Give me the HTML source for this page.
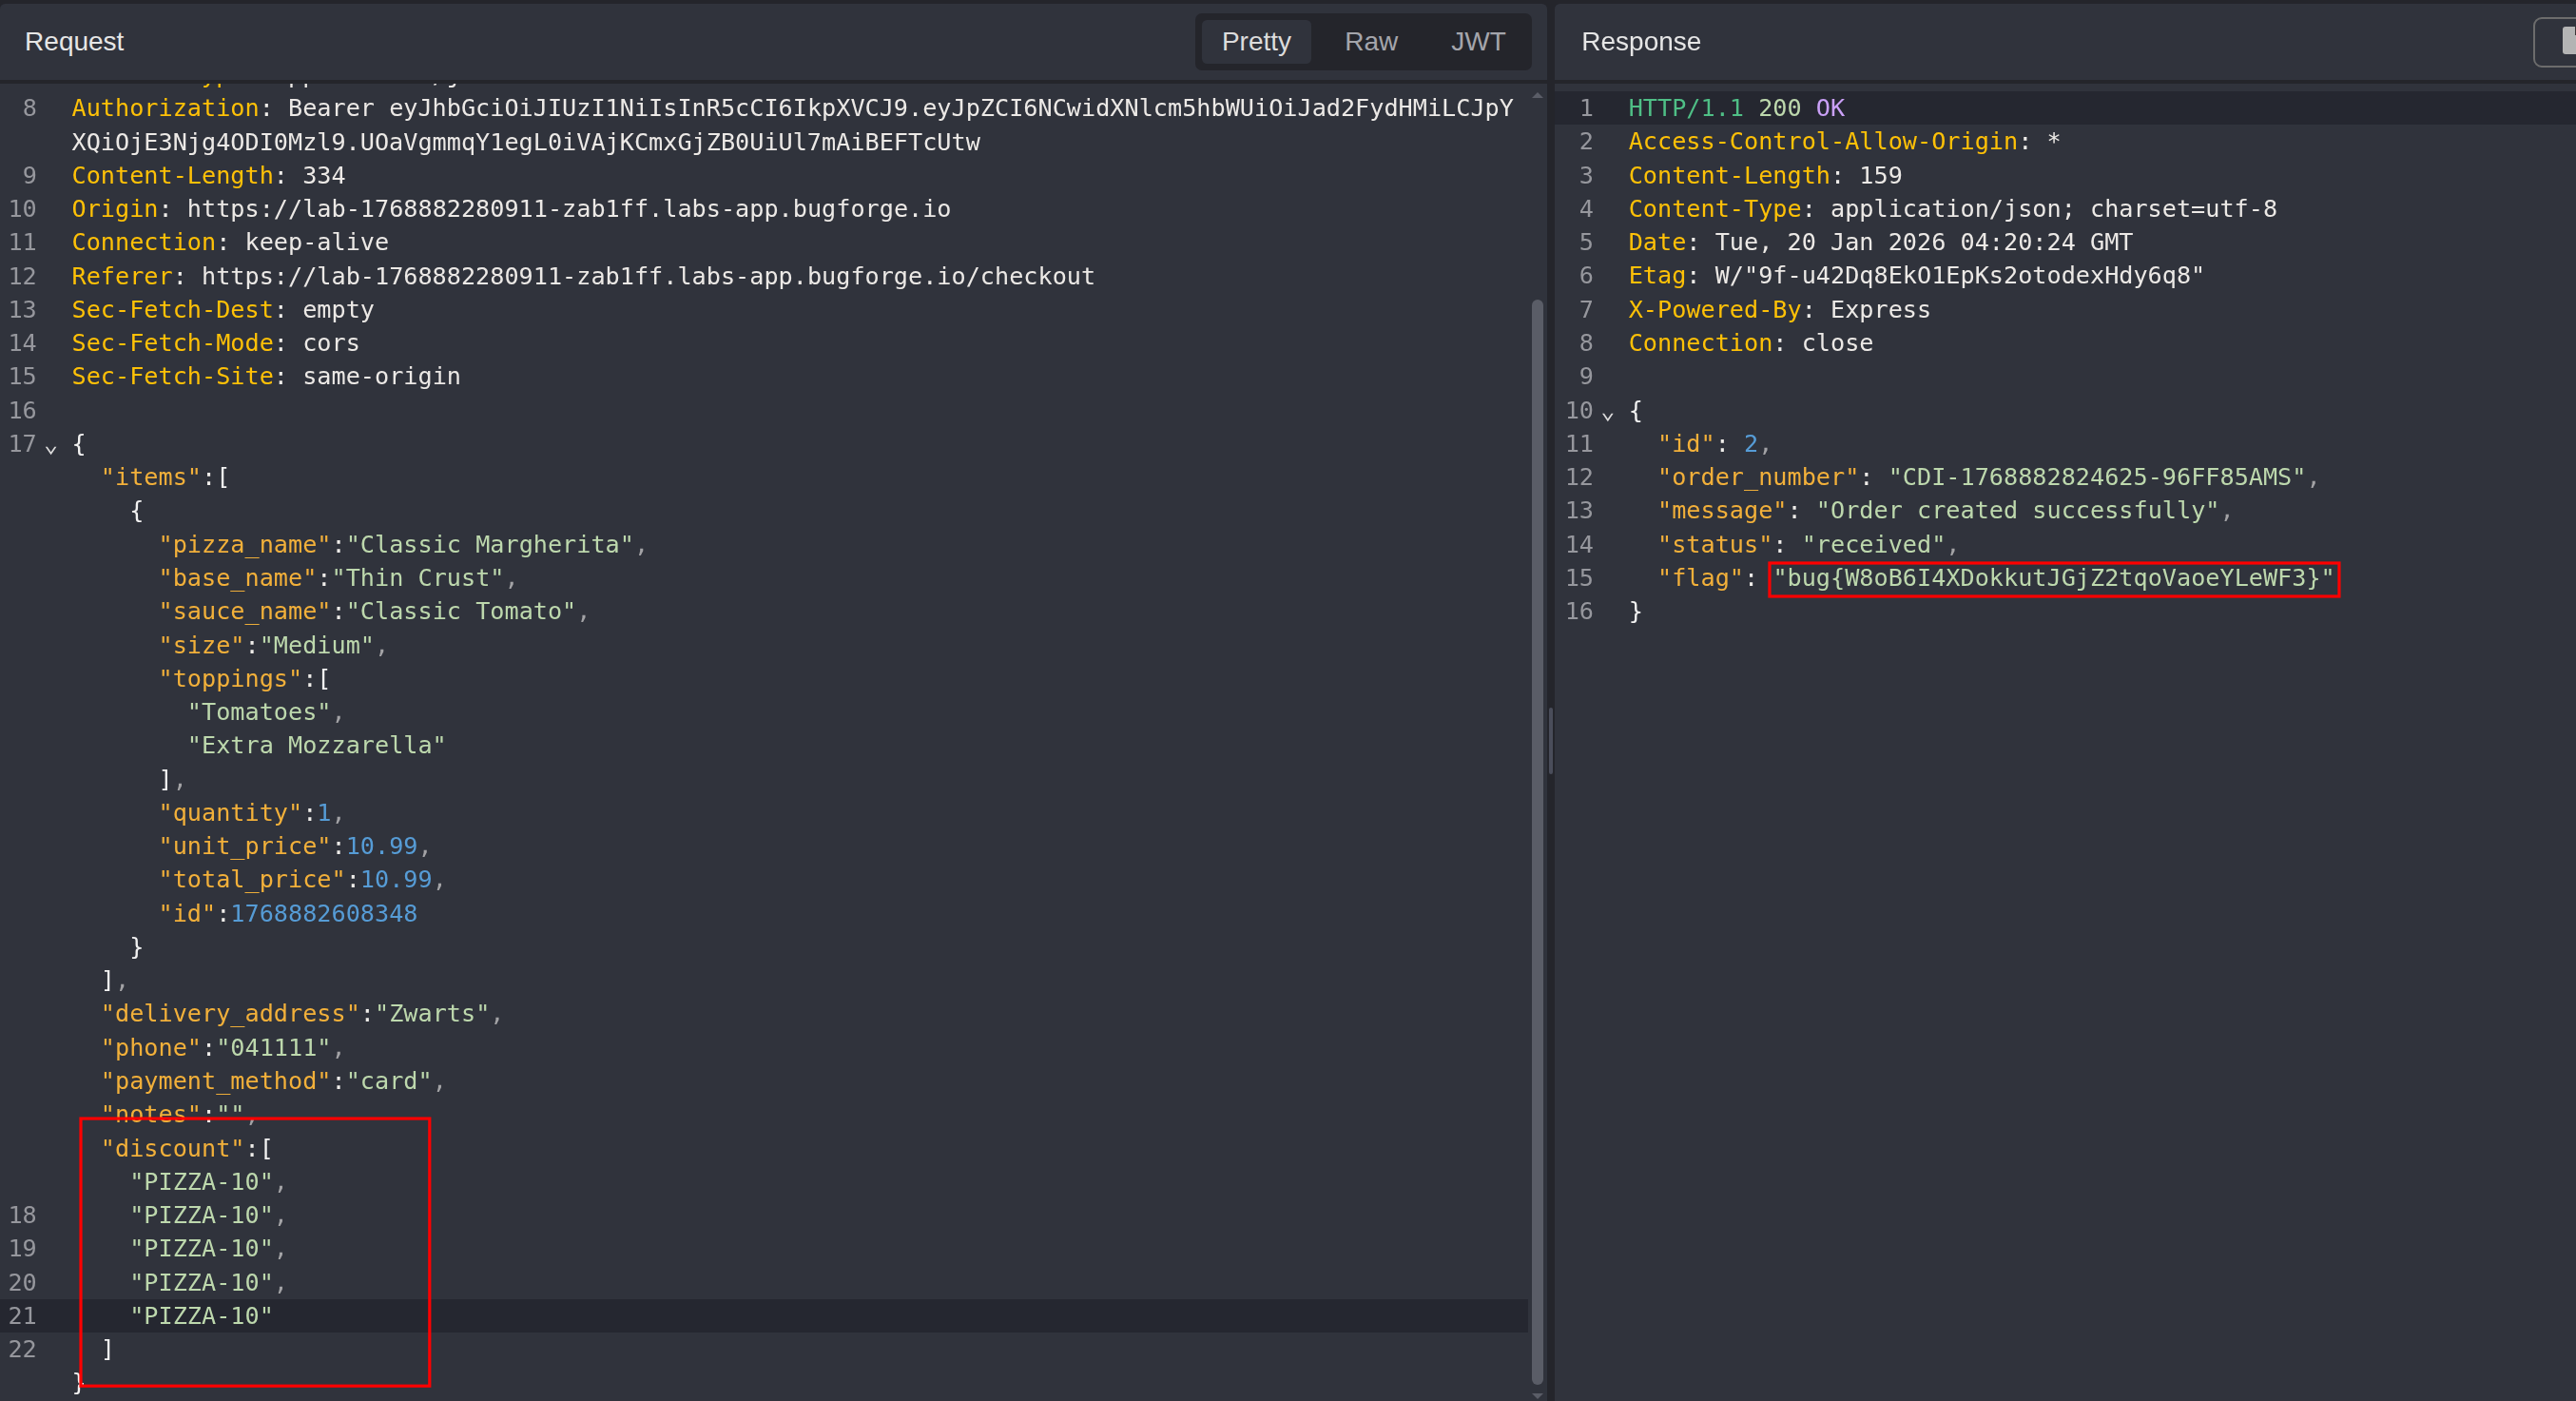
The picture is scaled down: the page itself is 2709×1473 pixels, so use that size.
<!DOCTYPE html>
<html lang="en">
<head>
<meta charset="utf-8">
<title>Request / Response</title>
<style>
html,body{margin:0;padding:0}
body{width:2709px;height:1473px;overflow:hidden;background:#24252b;position:relative;
  font-family:"Liberation Sans",sans-serif;}
.panel{position:absolute;top:4px;height:1469px;background:#30333c;border-radius:5.4px 5.4px 0 0;overflow:hidden}
#req{left:0;width:1627px}
#res{left:1635px;width:1200px}
.hdr{position:absolute;left:0;right:0;top:0;height:80px}
.div{position:absolute;left:0;right:0;top:80px;height:4px;background:#24252b}
.title{position:absolute;top:0;height:80px;line-height:80px;font-size:28px;color:#e6e6e6;white-space:nowrap}
#req .title{left:26.1px}
#res .title{left:28.3px}
.tabs{position:absolute;left:1257px;top:10px;width:354px;height:60px;background:#24252b;border-radius:7px}
.tab{position:absolute;top:7px;height:46px;line-height:46px;font-size:28px;color:#a4a5ab;text-align:center;border-radius:5.4px;white-space:nowrap}
.tab.on{background:#30333c;color:#dcdcdc}
.btn{position:absolute;left:1029px;top:14px;width:80px;height:49px;border:2px solid #6c6c6c;border-radius:9px}
.btn i{position:absolute;left:29px;top:8px;width:30px;height:29px;background:#b4b4b4;border-radius:3px}
.btn b{position:absolute;left:41.6px;top:8px;width:8px;height:8.6px;background:#3a3536}
.ed{position:absolute;left:0;right:0;top:84px;bottom:0;overflow:hidden;
  font-family:"DejaVu Sans Mono","Liberation Mono",monospace;font-size:25.2px;color:#ece9e6}
.rows{position:absolute;left:0;right:0}
.row{position:relative;height:35.27px;line-height:35.27px;white-space:pre}
.row.act{background:#252730}
.ln{position:absolute;left:0;width:38.8px;text-align:right;color:#96979d}
.fold{position:absolute;left:46px;width:15.2px;color:#dcdcdc;text-align:center}
.code{position:absolute;left:75.5px}
#res .ln{width:41px}
#res .fold{left:48.2px}
#res .code{left:77.7px}
.hn{color:#ffc107}
.pr{color:#f2b03a}
.st{color:#bdd8ad}
.nu{color:#569cd6}
.pu{color:#efedea}
.cm{color:#a3a3a6}
.br{color:#f2f2f2}
.hv{color:#4fbf86}
.ok{color:#caa0f7}
.sb{position:absolute;left:1607px;top:84px;bottom:0;width:20px;background:#30333c}
.sb .thumb{position:absolute;left:4px;width:12px;top:227px;height:1141px;border-radius:6px;background:#5a5d67}
.sb .up{position:absolute;left:4px;top:9px;width:0;height:0;border-left:6px solid transparent;border-right:6px solid transparent;border-bottom:6px solid #5a5d67}
.sb .dn{position:absolute;left:4px;top:1377px;width:0;height:0;border-left:6px solid transparent;border-right:6px solid transparent;border-top:6px solid #5a5d67}
.handle{position:absolute;left:1629px;top:744px;width:4px;height:70px;border-radius:2px;background:#4a4d5a}
.anno{position:absolute;left:0;top:0;pointer-events:none}
#req .rows{will-change:transform}
</style>
</head>
<body>
<div id="req" class="panel">
  <div class="hdr">
    <span class="title">Request</span>
    <div class="tabs">
      <span class="tab on" style="left:7px;width:115px">Pretty</span>
      <span class="tab" style="left:136.5px;width:97.6px">Raw</span>
      <span class="tab" style="left:248.5px;width:99.2px">JWT</span>
    </div>
  </div>
  <div class="div"></div>
  <div class="ed">
    <div class="rows" style="top:-27.070px">
<div class="row"><span class="ln">7</span><span class="code"><span class="hn">Content-Type</span><span class="pu">:</span><span class="tx"> application/json</span></span></div>
<div class="row"><span class="ln">8</span><span class="code"><span class="hn">Authorization</span><span class="pu">:</span><span class="tx"> Bearer eyJhbGciOiJIUzI1NiIsInR5cCI6IkpXVCJ9.eyJpZCI6NCwidXNlcm5hbWUiOiJad2FydHMiLCJpY</span></span></div>
<div class="row"><span class="code"><span class="tx">XQiOjE3Njg4ODI0Mzl9.UOaVgmmqY1egL0iVAjKCmxGjZB0UiUl7mAiBEFTcUtw</span></span></div>
<div class="row"><span class="ln">9</span><span class="code"><span class="hn">Content-Length</span><span class="pu">:</span><span class="tx"> 334</span></span></div>
<div class="row"><span class="ln">10</span><span class="code"><span class="hn">Origin</span><span class="pu">:</span><span class="tx"> https://lab-1768882280911-zab1ff.labs-app.bugforge.io</span></span></div>
<div class="row"><span class="ln">11</span><span class="code"><span class="hn">Connection</span><span class="pu">:</span><span class="tx"> keep-alive</span></span></div>
<div class="row"><span class="ln">12</span><span class="code"><span class="hn">Referer</span><span class="pu">:</span><span class="tx"> https://lab-1768882280911-zab1ff.labs-app.bugforge.io/checkout</span></span></div>
<div class="row"><span class="ln">13</span><span class="code"><span class="hn">Sec-Fetch-Dest</span><span class="pu">:</span><span class="tx"> empty</span></span></div>
<div class="row"><span class="ln">14</span><span class="code"><span class="hn">Sec-Fetch-Mode</span><span class="pu">:</span><span class="tx"> cors</span></span></div>
<div class="row"><span class="ln">15</span><span class="code"><span class="hn">Sec-Fetch-Site</span><span class="pu">:</span><span class="tx"> same-origin</span></span></div>
<div class="row"><span class="ln">16</span><span class="code"></span></div>
<div class="row"><span class="ln">17</span><span class="fold">⌄</span><span class="code"><span class="br">{</span></span></div>
<div class="row"><span class="code"><span class="tx">  </span><span class="pr">"items"</span><span class="pu">:</span><span class="br">[</span></span></div>
<div class="row"><span class="code"><span class="tx">    </span><span class="br">{</span></span></div>
<div class="row"><span class="code"><span class="tx">      </span><span class="pr">"pizza_name"</span><span class="pu">:</span><span class="st">"Classic Margherita"</span><span class="cm">,</span></span></div>
<div class="row"><span class="code"><span class="tx">      </span><span class="pr">"base_name"</span><span class="pu">:</span><span class="st">"Thin Crust"</span><span class="cm">,</span></span></div>
<div class="row"><span class="code"><span class="tx">      </span><span class="pr">"sauce_name"</span><span class="pu">:</span><span class="st">"Classic Tomato"</span><span class="cm">,</span></span></div>
<div class="row"><span class="code"><span class="tx">      </span><span class="pr">"size"</span><span class="pu">:</span><span class="st">"Medium"</span><span class="cm">,</span></span></div>
<div class="row"><span class="code"><span class="tx">      </span><span class="pr">"toppings"</span><span class="pu">:</span><span class="br">[</span></span></div>
<div class="row"><span class="code"><span class="tx">        </span><span class="st">"Tomatoes"</span><span class="cm">,</span></span></div>
<div class="row"><span class="code"><span class="tx">        </span><span class="st">"Extra Mozzarella"</span></span></div>
<div class="row"><span class="code"><span class="tx">      </span><span class="br">]</span><span class="cm">,</span></span></div>
<div class="row"><span class="code"><span class="tx">      </span><span class="pr">"quantity"</span><span class="pu">:</span><span class="nu">1</span><span class="cm">,</span></span></div>
<div class="row"><span class="code"><span class="tx">      </span><span class="pr">"unit_price"</span><span class="pu">:</span><span class="nu">10.99</span><span class="cm">,</span></span></div>
<div class="row"><span class="code"><span class="tx">      </span><span class="pr">"total_price"</span><span class="pu">:</span><span class="nu">10.99</span><span class="cm">,</span></span></div>
<div class="row"><span class="code"><span class="tx">      </span><span class="pr">"id"</span><span class="pu">:</span><span class="nu">1768882608348</span></span></div>
<div class="row"><span class="code"><span class="tx">    </span><span class="br">}</span></span></div>
<div class="row"><span class="code"><span class="tx">  </span><span class="br">]</span><span class="cm">,</span></span></div>
<div class="row"><span class="code"><span class="tx">  </span><span class="pr">"delivery_address"</span><span class="pu">:</span><span class="st">"Zwarts"</span><span class="cm">,</span></span></div>
<div class="row"><span class="code"><span class="tx">  </span><span class="pr">"phone"</span><span class="pu">:</span><span class="st">"041111"</span><span class="cm">,</span></span></div>
<div class="row"><span class="code"><span class="tx">  </span><span class="pr">"payment_method"</span><span class="pu">:</span><span class="st">"card"</span><span class="cm">,</span></span></div>
<div class="row"><span class="code"><span class="tx">  </span><span class="pr">"notes"</span><span class="pu">:</span><span class="st">""</span><span class="cm">,</span></span></div>
<div class="row"><span class="code"><span class="tx">  </span><span class="pr">"discount"</span><span class="pu">:</span><span class="br">[</span></span></div>
<div class="row"><span class="code"><span class="tx">    </span><span class="st">"PIZZA-10"</span><span class="cm">,</span></span></div>
<div class="row"><span class="ln">18</span><span class="code"><span class="tx">    </span><span class="st">"PIZZA-10"</span><span class="cm">,</span></span></div>
<div class="row"><span class="ln">19</span><span class="code"><span class="tx">    </span><span class="st">"PIZZA-10"</span><span class="cm">,</span></span></div>
<div class="row"><span class="ln">20</span><span class="code"><span class="tx">    </span><span class="st">"PIZZA-10"</span><span class="cm">,</span></span></div>
<div class="row act"><span class="ln">21</span><span class="code"><span class="tx">    </span><span class="st">"PIZZA-10"</span></span></div>
<div class="row"><span class="ln">22</span><span class="code"><span class="tx">  </span><span class="br">]</span></span></div>
<div class="row"><span class="code"><span class="br">}</span></span></div>
    </div>
  </div>
  <div class="sb"><div class="up"></div><div class="thumb"></div><div class="dn"></div></div>
</div>
<div class="handle"></div>
<div id="res" class="panel">
  <div class="hdr">
    <span class="title">Response</span>
    <div class="btn"><i></i><b></b></div>
  </div>
  <div class="div"></div>
  <div class="ed">
    <div class="rows" style="top:8.170px">
<div class="row act"><span class="ln">1</span><span class="code"><span class="hv">HTTP/1.1</span><span class="tx"> </span><span class="st">200</span><span class="tx"> </span><span class="ok">OK</span></span></div>
<div class="row"><span class="ln">2</span><span class="code"><span class="hn">Access-Control-Allow-Origin</span><span class="pu">:</span><span class="tx"> *</span></span></div>
<div class="row"><span class="ln">3</span><span class="code"><span class="hn">Content-Length</span><span class="pu">:</span><span class="tx"> 159</span></span></div>
<div class="row"><span class="ln">4</span><span class="code"><span class="hn">Content-Type</span><span class="pu">:</span><span class="tx"> application/json; charset=utf-8</span></span></div>
<div class="row"><span class="ln">5</span><span class="code"><span class="hn">Date</span><span class="pu">:</span><span class="tx"> Tue, 20 Jan 2026 04:20:24 GMT</span></span></div>
<div class="row"><span class="ln">6</span><span class="code"><span class="hn">Etag</span><span class="pu">:</span><span class="tx"> W/"9f-u42Dq8EkO1EpKs2otodexHdy6q8"</span></span></div>
<div class="row"><span class="ln">7</span><span class="code"><span class="hn">X-Powered-By</span><span class="pu">:</span><span class="tx"> Express</span></span></div>
<div class="row"><span class="ln">8</span><span class="code"><span class="hn">Connection</span><span class="pu">:</span><span class="tx"> close</span></span></div>
<div class="row"><span class="ln">9</span><span class="code"></span></div>
<div class="row"><span class="ln">10</span><span class="fold">⌄</span><span class="code"><span class="br">{</span></span></div>
<div class="row"><span class="ln">11</span><span class="code"><span class="tx">  </span><span class="pr">"id"</span><span class="pu">: </span><span class="nu">2</span><span class="cm">,</span></span></div>
<div class="row"><span class="ln">12</span><span class="code"><span class="tx">  </span><span class="pr">"order_number"</span><span class="pu">: </span><span class="st">"CDI-1768882824625-96FF85AMS"</span><span class="cm">,</span></span></div>
<div class="row"><span class="ln">13</span><span class="code"><span class="tx">  </span><span class="pr">"message"</span><span class="pu">: </span><span class="st">"Order created successfully"</span><span class="cm">,</span></span></div>
<div class="row"><span class="ln">14</span><span class="code"><span class="tx">  </span><span class="pr">"status"</span><span class="pu">: </span><span class="st">"received"</span><span class="cm">,</span></span></div>
<div class="row"><span class="ln">15</span><span class="code"><span class="tx">  </span><span class="pr">"flag"</span><span class="pu">: </span><span class="st">"bug{W8oB6I4XDokkutJGjZ2tqoVaoeYLeWF3}"</span></span></div>
<div class="row"><span class="ln">16</span><span class="code"><span class="br">}</span></span></div>
    </div>
  </div>
</div>
<svg class="anno" width="2709" height="1473" viewBox="0 0 2709 1473">
  <rect x="85" y="1176.05" width="366.8" height="281.15" fill="none" stroke="#ff0000" stroke-width="3.2"/>
  <rect x="1860.95" y="592" width="599" height="35" fill="none" stroke="#ff0000" stroke-width="3.2"/>
</svg>
</body>
</html>
